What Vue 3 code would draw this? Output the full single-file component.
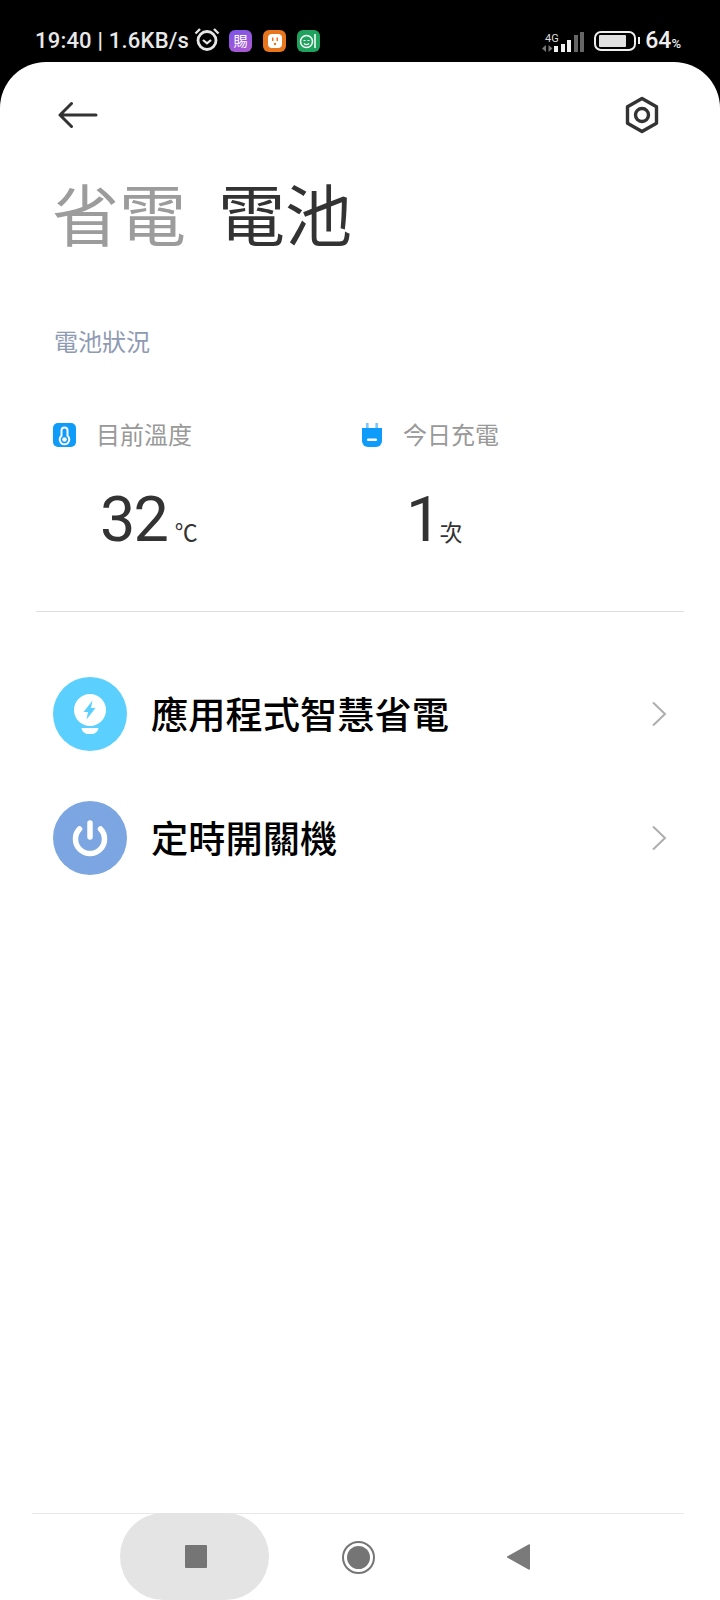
<script setup>
const stats = [
  { label: "目前溫度", value: "32", unit: "℃", icon: "temp" },
  { label: "今日充電", value: "1", unit: "次", icon: "plug" },
];
const rows = [
  { title: "應用程式智慧省電", icon: "bulb" },
  { title: "定時開關機", icon: "power" },
];
</script>

<template>
  <div class="page">
    <div class="status">
      <div class="status-left">
        <span class="clock">19:40 | 1.6KB/s</span>
        <svg class="alarm" width="26" height="24" viewBox="0 0 26 24" fill="none" stroke="#e6e6e6">
          <circle cx="13" cy="13.5" r="9" stroke-width="2.8" />
          <path d="M9 13l4 3.4 4-3.4" stroke-width="2.2" />
          <path d="M1.5 6.5L6 2M24.5 6.5L20 2" stroke-width="2.4" />
        </svg>
        <span class="app purple">
          <span class="app-glyph">賜</span>
        </span>
        <span class="app orange">
          <svg width="16" height="16" viewBox="0 0 16 16">
            <rect x="1" y="1" width="14" height="14" rx="4" fill="#fff" />
            <rect x="5" y="4.5" width="1.5" height="3.5" fill="#e8761c" />
            <rect x="9.5" y="4.5" width="1.5" height="3.5" fill="#e8761c" />
            <circle cx="8" cy="11" r="1.2" fill="#e8761c" />
          </svg>
        </span>
        <span class="app green">
          <svg width="20" height="18" viewBox="0 0 20 18" fill="none" stroke="#fff" stroke-width="1.5">
            <circle cx="7.5" cy="9.5" r="6" />
            <path d="M4.5 8.5h2M8.5 8.5h2M5 11.5c1.5 1.5 3.500 1.500 5 0" stroke-width="1.1" />
            <path d="M16 2v14" />
          </svg>
        </span>
      </div>
      <div class="status-right">
        <div class="signal">
          <div class="net">
            <span class="net-label">4G</span>
            <svg width="11" height="7" viewBox="0 0 11 7" fill="#777">
              <path d="M0 3.500L4 0v7zM6.500 0l4 3.500-4 3.500z" />
            </svg>
          </div>
          <span class="bar" style="height: 6px"></span>
          <span class="bar" style="height: 8px"></span>
          <span class="bar" style="height: 12px"></span>
          <span class="bar dim" style="height: 17px"></span>
          <span class="bar dim" style="height: 20px"></span>
        </div>
        <div class="battery"><span class="battery-fill"></span></div>
        <span class="battery-nub"></span>
        <span class="percent">64<small>%</small></span>
      </div>
    </div>

    <div class="card">
      <div class="topbar">
        <svg width="40" height="28" viewBox="0 0 40 28" fill="none" stroke="#333" stroke-width="3" stroke-linecap="round" stroke-linejoin="round">
          <path d="M38 14H2M13.500 2.500L2 14l11.500 11.500" />
        </svg>
        <svg width="36" height="38" viewBox="0 0 36 38" fill="none" stroke="#333">
          <path d="M18 2.500l14.500 8.300v16.400L18 35.500 3.500 27.200V10.800z" stroke-width="3.400" stroke-linejoin="round" />
          <circle cx="18" cy="19" r="6.500" stroke-width="3.400" />
        </svg>
      </div>

      <div class="title">
        <span class="tab dim-tab">省電</span>
        <span class="tab">電池</span>
      </div>

      <div class="section">電池狀況</div>

      <div class="stats">
        <div v-for="s in stats" :key="s.label" class="stat">
          <div class="stat-head">
            <svg v-if="s.icon === 'temp'" class="stat-icon" width="24" height="24" viewBox="0 0 24 24">
              <rect width="23" height="24" rx="5" fill="#0f9bfa" />
              <path d="M11.500 4.500a3 3 0 0 1 3 3v5.300a4.800 4.800 0 1 1-6 0V7.500a3 3 0 0 1 3-3z" fill="none" stroke="#fff" stroke-width="2" />
              <circle cx="11.500" cy="16.500" r="2.300" fill="#fff" />
            </svg>
            <svg v-else class="stat-icon plug" width="24" height="24" viewBox="0 0 24 24">
              <rect x="6" y="0" width="2.600" height="6" fill="#7cc6fb" />
              <rect x="15.400" y="0" width="2.600" height="6" fill="#7cc6fb" />
              <path d="M2 5h20v13a6 6 0 0 1-6 6H8a6 6 0 0 1-6-6z" fill="#0f9bfa" />
              <rect x="7" y="15.500" width="10" height="2.600" rx="1" fill="#fff" />
            </svg>
            <span class="stat-label">{{ s.label }}</span>
          </div>
          <div class="stat-value">
            <span class="num">{{ s.value }}</span>
            <span class="unit" :class="s.icon">{{ s.unit }}</span>
          </div>
        </div>
      </div>

      <div class="divider"></div>

      <div class="list">
        <div v-for="r in rows" :key="r.title" class="row">
          <div class="circle" :class="r.icon">
            <svg v-if="r.icon === 'bulb'" width="34" height="40" viewBox="0 0 34 40">
              <circle cx="17" cy="16" r="16" fill="#fff" />
              <path d="M19.500 6.500L10.500 18h4.500l-1.500 7.500 9-11.500h-4.500z" fill="#5bd0ff" />
              <path d="M8.500 34h17c-.5 3.500-3.500 6-6.500 6h-4c-3 0-6-2.500-6.500-6z" fill="#fff" />
            </svg>
            <svg v-else width="36" height="38" viewBox="0 0 36 38" fill="none" stroke="#fff" stroke-width="5.500" stroke-linecap="round">
              <path d="M7.500 10a14.500 14.500 0 1 0 21 0" />
              <path d="M18 4v14" />
            </svg>
          </div>
          <span class="row-title">{{ r.title }}</span>
          <svg class="chevron" width="16" height="26" viewBox="0 0 16 26" fill="none" stroke="#aeaeae" stroke-width="2">
            <path d="M2 1.500L14 13 2 24.500" />
          </svg>
        </div>
      </div>

      <div class="nav">
        <div class="nav-pill"><span class="nav-square"></span></div>
        <div class="nav-home"><span></span></div>
        <svg class="nav-back" width="24" height="26" viewBox="0 0 24 26">
          <path d="M23 1v24a1 1 0 0 1-1.500.500L1 14a1 1 0 0 1 0-2L21.500.500A1 1 0 0 1 23 1z" fill="#7a7a7a" />
        </svg>
      </div>
    </div>
  </div>
</template>

<style scoped>
.page {
  width: 720px;
  height: 1600px;
  background: #000;
  display: flex;
  flex-direction: column;
  overflow: hidden;
  font-family: Roboto, "Noto Sans CJK TC", sans-serif;
}

.status {
  height: 62px;
  display: flex;
  justify-content: space-between;
  padding: 0 39px 0 35px;
  color: #e8e8e8;
  box-sizing: border-box;
}

.status-left {
  display: flex;
  align-items: center;
  padding-top: 19px;
}

.status-right {
  display: flex;
  align-items: center;
  padding-top: 19px;
}

.clock {
  font-size: 22px;
  font-weight: 500;
  letter-spacing: 0.2px;
}

.alarm {
  margin-left: 5px;
  margin-top: -4px;
}

.app {
  width: 23px;
  height: 22px;
  border-radius: 6px;
  display: flex;
  align-items: center;
  justify-content: center;
  margin-left: 10px;
}

.app + .app {
  margin-left: 11px;
}

.purple {
  background: linear-gradient(160deg, #7a55e8, #b05ad0);
  margin-left: 9px;
}

.orange {
  background: #e8761c;
}

.green {
  background: #1fa25e;
}

.app-glyph {
  color: #fff;
  font-size: 14px;
  line-height: 1;
}

.signal {
  display: flex;
  align-items: flex-end;
  gap: 2.500px;
  height: 24px;
  margin-top: -2px;
}

.net {
  display: flex;
  flex-direction: column;
  align-items: center;
  margin-right: -7px;
}

.net-label {
  font-size: 11px;
  line-height: 13px;
  color: #ddd;
  margin-left: 8px;
}

.bar {
  width: 4px;
  background: #f0f0f0;
}

.bar.dim {
  background: #666;
}

.battery {
  width: 42px;
  height: 20px;
  border: 2.500px solid #eee;
  border-radius: 7px;
  box-sizing: border-box;
  padding: 2px 3px;
  margin-left: 10px;
}

.battery-fill {
  display: block;
  width: 27px;
  height: 100%;
  background: #e0e0e0;
  border-radius: 1px;
}

.battery-nub {
  width: 2px;
  height: 7px;
  background: #eee;
  margin-left: 2px;
  margin-right: 5px;
}

.percent {
  font-size: 23px;
  font-weight: 500;
  color: #eee;
}

.percent small {
  font-size: 13px;
}

.card {
  flex: 1;
  background: #fff;
  border-radius: 46px 46px 0 0;
  display: flex;
  flex-direction: column;
}

.topbar {
  display: flex;
  justify-content: space-between;
  align-items: center;
  padding: 33px 60px 0 58px;
  height: 40px;
}

.title {
  display: flex;
  gap: 32px;
  padding: 43px 0 0 52px;
  font-size: 67px;
  line-height: 80px;
  font-weight: 400;
  color: #333;
}

.dim-tab {
  color: #9c9c9c;
}

.section {
  margin: 69px 0 0 54px;
  font-size: 24px;
  line-height: 32px;
  color: #8f9bb3;
}

.stats {
  display: flex;
  margin: 58px 0 0 53px;
}

.stat {
  width: 306px;
}

.stat-head {
  display: flex;
  align-items: center;
  height: 32px;
}

.stat-icon {
  margin-right: 19px;
  margin-top: 4px;
}

.plug {
  margin-left: 1px;
}

.stat-label {
  font-size: 24px;
  color: #999;
}

.stat-value {
  display: flex;
  align-items: baseline;
  margin: 32px 0 0 47px;
  color: #333;
}

.num {
  font-size: 63px;
  line-height: 78px;
  letter-spacing: -2px;
  font-family: Roboto, sans-serif;
}

.unit {
  font-size: 23px;
}

.unit.temp {
  margin-left: 8px;
}

.unit.plug {
  margin-left: 0;
}

.divider {
  height: 1px;
  background: #dedede;
  margin: 52px 36px 0;
}

.list {
  display: flex;
  flex-direction: column;
  gap: 50px;
  padding: 65px 53px 0;
}

.row {
  display: flex;
  align-items: center;
  height: 74px;
}

.circle {
  width: 74px;
  height: 74px;
  border-radius: 50%;
  display: flex;
  align-items: center;
  justify-content: center;
  flex-shrink: 0;
}

.circle.bulb {
  background: #5bd0ff;
}

.circle.power {
  background: #7ca6e2;
}

.row-title {
  flex: 1;
  margin-left: 24px;
  padding-bottom: 3px;
  font-size: 37.250px;
  font-weight: 500;
  color: #000;
}

.nav {
  margin: auto 36px 0 32px;
  height: 87px;
  border-top: 1px solid #e8e8e8;
  box-sizing: border-box;
  display: flex;
  align-items: center;
  position: relative;
}

.nav-pill {
  width: 149px;
  height: 87px;
  margin-left: 88px;
  margin-top: -1px;
  padding-left: 3px;
  box-sizing: border-box;
  border-radius: 60px;
  background: #e4e4e4;
  display: flex;
  align-items: center;
  justify-content: center;
}

.nav-square {
  width: 22px;
  height: 23px;
  background: #757575;
  border-radius: 1px;
}

.nav-home {
  width: 33px;
  height: 33px;
  border: 2px solid #757575;
  border-radius: 50%;
  box-sizing: border-box;
  display: flex;
  align-items: center;
  justify-content: center;
  margin-left: 73px;
}

.nav-home span {
  width: 23px;
  height: 23px;
  border-radius: 50%;
  background: #757575;
}

.nav-back {
  margin-left: 132px;
}
</style>
